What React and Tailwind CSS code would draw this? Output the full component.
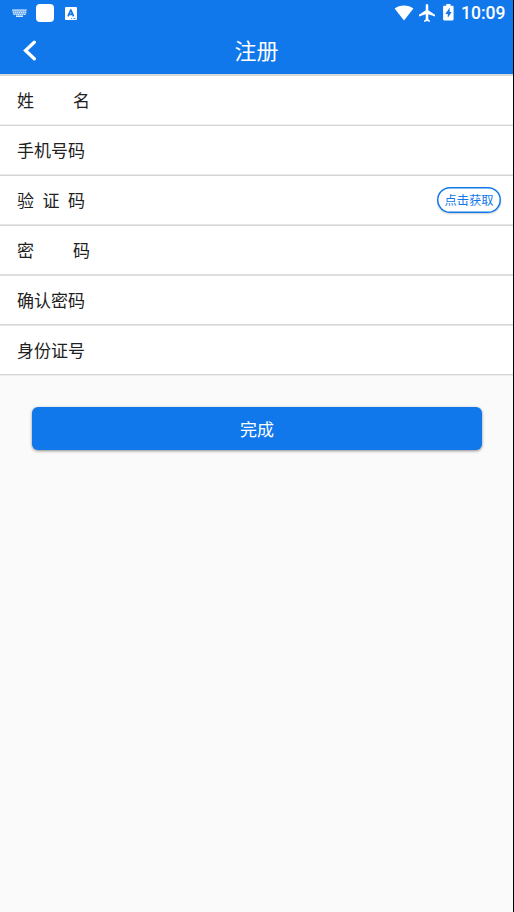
import React, { useState } from "react";

const fields = [
  { name: "realName", chars: ["姓", "名"], width: "w-[73px]", lines: "border-t-[#d8d8d8] border-b-[#eeeeee]" },
  { name: "phone", chars: ["手", "机", "号", "码"], width: "w-[68px]", lines: "border-t-[#d6d6d6] border-b-[#eaeaea]" },
  { name: "code", chars: ["验", "证", "码"], width: "w-[68px]", lines: "border-t-[#d6d6d6] border-b-[#e4e4e4]" },
  { name: "password", chars: ["密", "码"], width: "w-[73px]", lines: "border-t-[#d8d8d8] border-b-[#dddddd]" },
  { name: "confirm", chars: ["确", "认", "密", "码"], width: "w-[68px]", lines: "border-t-[#dddddd] border-b-[#d8d8d8]" },
  { name: "idCard", chars: ["身", "份", "证", "号"], width: "w-[68px]", lines: "border-t-[#e4e4e4] border-b-[#d6d6d6]" },
];

const KeyboardIcon = () => (
  <svg width="15" height="9" viewBox="0 0 15 9">
    <path d="M0 0h15l-1 6h-3v2H4V6H1z" fill="#fff" opacity=".45" />
    <path d="M.5 1.500h14M1 3.500h13M2 5.500h11" stroke="#fff" strokeWidth="1" strokeDasharray="1 1" opacity=".7" />
    <path d="M4 7.500h7" stroke="#fff" strokeWidth="1" opacity=".7" />
  </svg>
);

const LangIcon = () => (
  <svg width="12" height="13" viewBox="0 0 12 13">
    <rect width="12" height="13" rx="1" fill="#fff" />
    <path d="M3 9.300L5.700 3h.2l2.700 6.300M4 7.300h3.800" fill="none" stroke="#1078eb" strokeWidth="1.700" />
    <path d="M6 11.500h1M8.500 11.500h2" stroke="#1078eb" strokeWidth=".8" />
  </svg>
);

const WifiIcon = () => (
  <svg width="20" height="16" viewBox="0 0 20 16" fill="#fff">
    <path d="M10 15.500L.6 3.600C3.200 1.500 6.400.5 10 .5s6.800 1 9.400 3.100z" />
  </svg>
);

const PlaneIcon = () => (
  <svg width="16" height="18" viewBox="2 2 19 20" preserveAspectRatio="none" fill="#fff">
    <path d="M21 16v-2l-8-5V3.500C13 2.670 12.330 2 11.500 2S10 2.670 10 3.500V9l-8 5v2l8-2.500V19l-2 1.500V22l3.500-1 3.500 1v-1.500L13 19v-5.500z" />
  </svg>
);

const BatteryIcon = () => (
  <svg width="11" height="17" viewBox="0 0 11 17">
    <path d="M3.300 0h4.200v1.700h1.900c.7 0 1.200.5 1.200 1.200v12.300c0 .7-.5 1.200-1.200 1.200H1.300c-.7 0-1.200-.5-1.200-1.200V2.900c0-.7.5-1.200 1.200-1.200h2z" fill="#fff" />
    <path d="M6.700 3.800L2.300 9.900h2.500v3.800l3.900-5.600H6.700z" fill="#1078eb" />
  </svg>
);

const App = () => {
  const [form, setForm] = useState({});

  return (
    <div className="h-[912px] w-[514px] overflow-hidden border-r border-black bg-[#fafafa] font-['Noto_Sans_CJK_SC',sans-serif] text-[#212121]">
      <header className="h-[74px] bg-[#1078eb] text-white">
        {/* Status bar */}
        <div className="flex h-[26px] items-center justify-between pr-2 pl-3">
          <div className="flex items-center">
            <KeyboardIcon />
            <div className="ml-[9px] h-[18px] w-[18px] rounded-[4px] bg-white"></div>
            <div className="ml-[11px]">
              <LangIcon />
            </div>
          </div>
          <div className="flex items-center">
            <WifiIcon />
            <div className="ml-[5px]">
              <PlaneIcon />
            </div>
            <div className="ml-2 -mt-px">
              <BatteryIcon />
            </div>
            <span className="ml-[7px] w-[44px] font-[Roboto,sans-serif] text-[17.500px] leading-[26px] font-medium whitespace-nowrap">
              10:09
            </span>
          </div>
        </div>

        {/* Title bar */}
        <div className="grid h-12 grid-cols-[60px_1fr_60px] items-center">
          <button type="button" className="pl-[23px]">
            <svg width="14" height="21" viewBox="0 0 14 21" fill="none">
              <path d="M11.300 2.200L2.500 10.500l8.800 8.300" stroke="#fff" strokeWidth="3.300" strokeLinecap="round" />
            </svg>
          </button>
          <h1 className="pb-0.5 text-center text-[22px] leading-[46px]">注册</h1>
        </div>
      </header>

      <form className="border-t border-[#d8d8d8]">
        {fields.map((field) => (
          <div key={field.name} className={`flex h-[50px] items-center border-y bg-white pr-3 pl-[17px] ${field.lines}`}>
            <label htmlFor={field.name} className={`flex justify-between text-[17px] leading-6 ${field.width}`}>
              {field.chars.map((char, i) => (
                <span key={i}>{char}</span>
              ))}
            </label>
            <input
              id={field.name}
              type={field.name === "password" || field.name === "confirm" ? "password" : "text"}
              value={form[field.name] || ""}
              onChange={(e) => setForm({ ...form, [field.name]: e.target.value })}
              className="ml-3 min-w-0 flex-1 focus:outline-none"
            />
            {field.name === "code" && (
              <button
                type="button"
                className="h-[26px] w-[64px] rounded-full bg-white text-[12.300px] leading-[26px] whitespace-nowrap text-[#1078eb] shadow-[inset_0_0_0_1.5px_#1078eb,0_1px_2px_rgba(0,0,0,0.2)]"
              >
                点击获取
              </button>
            )}
          </div>
        ))}
      </form>

      {/* Submit */}
      <div className="border-t border-[#ececec] px-8 pt-[31px]">
        <button
          type="button"
          className="h-[43px] w-[450px] rounded-[6px] bg-[#1078eb] text-[17px] text-white shadow-[0_1px_3px_rgba(0,0,0,0.45)]"
        >
          完成
        </button>
      </div>
    </div>
  );
};

export default App;
